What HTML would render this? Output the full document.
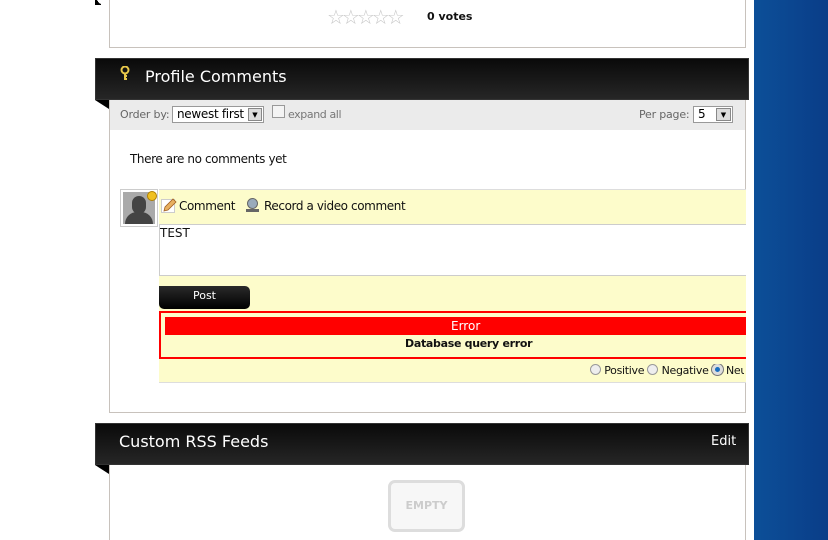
<!DOCTYPE html>
<html><head><meta charset="utf-8"><style>
*{margin:0;padding:0;box-sizing:border-box}
html,body{width:828px;height:540px;overflow:hidden}
body{background:#fff;position:relative;font-family:"DejaVu Sans","Liberation Sans",sans-serif;}
.a{position:absolute}
.blue{left:754px;top:0;width:74px;height:540px;background:linear-gradient(90deg,#0c4f98,#0a3d88)}
.box{border:1px solid #c8c2bc;background:#fff}
.hdr{background:linear-gradient(#0a0a0a,#262626);border:1px solid #333;color:#fff}
.tri{width:0;height:0;border-top:9px solid #000;border-left:14px solid transparent}
.t{font-size:12px;color:#111;white-space:nowrap;letter-spacing:-0.4px}
</style></head><body>
<div class="a blue"></div>
<div class="a box" style="left:109px;top:-5px;width:637px;height:53px"></div>
<div class="a" style="left:95px;top:0;width:8px;height:5px;background:linear-gradient(225deg,#fff 50%,#000 50%)"></div>
<div class="a" style="left:327px;top:5px;font-size:20px;color:#c8c8c8;letter-spacing:-3px">☆☆☆☆☆</div>
<div class="a t" style="left:427px;top:10px;font-weight:bold;font-size:11px;letter-spacing:0">0 votes</div>

<div class="a box" style="left:109px;top:98px;width:637px;height:315px"></div>
<div class="a hdr" style="left:95px;top:58px;width:654px;height:42px"></div>
<div class="a tri" style="left:95px;top:100px"></div>
<svg class="a" style="left:120px;top:66px" width="11" height="15"><circle cx="5" cy="4" r="3.5" fill="none" stroke="#e8c84a" stroke-width="2"/><path d="M5 7v7M5 10h2M5 13h2" stroke="#e8c84a" stroke-width="2"/></svg>
<div class="a" style="left:145px;top:67px;color:#fff;font-size:16px">Profile Comments</div>
<div class="a" style="left:110px;top:100px;width:635px;height:30px;background:#ebebeb"></div>
<div class="a" style="left:120px;top:108px;font-size:11px;color:#666;letter-spacing:-0.2px">Order by:</div>
<div class="a" style="left:172px;top:106px;width:92px;height:17px;border:1px solid #999;background:#fff;font-size:12px;padding-left:4px;line-height:15px;letter-spacing:-0.3px">newest first</div>
<div class="a" style="left:248px;top:108px;width:14px;height:13px;background:#ddd;border:1px solid #888;font-size:7px;text-align:center;line-height:13px">▼</div>
<div class="a" style="left:272px;top:105px;width:13px;height:13px;border:1px solid #999;background:#f4f4f4"></div>
<div class="a" style="left:288px;top:108px;font-size:11px;color:#777;letter-spacing:-0.4px">expand all</div>
<div class="a" style="left:639px;top:108px;font-size:11px;color:#666;letter-spacing:-0.2px">Per page:</div>
<div class="a" style="left:693px;top:106px;width:40px;height:17px;border:1px solid #999;background:#fff;font-size:12px;padding-left:4px;line-height:15px">5</div>
<div class="a" style="left:716px;top:108px;width:15px;height:13px;background:#ddd;border:1px solid #888;font-size:7px;text-align:center;line-height:13px">▼</div>
<div class="a t" style="left:130px;top:152px">There are no comments yet</div>

<div class="a" style="left:120px;top:189px;width:38px;height:38px;border:1px solid #ccc;background:#fff;padding:2px"><div style="position:relative;width:32px;height:32px;background:#aaa;overflow:hidden"><div style="position:absolute;left:9px;top:4px;width:14px;height:18px;border-radius:7px;background:#444"></div><div style="position:absolute;left:2px;top:20px;width:28px;height:16px;border-radius:12px 12px 0 0;background:#444"></div></div><div style="position:absolute;left:26px;top:1px;width:10px;height:10px;border-radius:5px;background:#f0c020;border:1px solid #b08000"></div></div>
<div class="a" style="left:159px;top:189px;width:587px;height:194px;background:#fdfccb;border-top:1px solid #ddd;border-bottom:1px solid #ddd"></div>
<svg class="a" style="left:161px;top:198px" width="16" height="16"><rect x="0.5" y="1.5" width="13" height="13" fill="#fff" stroke="#ccc"/><path d="M3 13l1-4 8-8 3 3-8 8z" fill="#e8b060" stroke="#a06020" stroke-width="0.8"/></svg>
<div class="a t" style="left:179px;top:199px">Comment</div>
<div class="a" style="left:246px;top:198px;width:13px;height:15px"><div style="position:absolute;left:1px;top:0;width:11px;height:11px;border-radius:6px;background:#9ab;border:1px solid #666"></div><div style="position:absolute;left:0;top:11px;width:13px;height:3px;background:#666"></div></div>
<div class="a t" style="left:264px;top:199px">Record a video comment</div>
<div class="a" style="left:159px;top:224px;width:587px;height:52px;background:#fff;border:1px solid #ccc;border-right:none"></div>
<div class="a t" style="left:160px;top:226px;letter-spacing:0">TEST</div>
<div class="a" style="left:159px;top:286px;width:91px;height:23px;background:linear-gradient(#2a2a2a,#000);border-radius:0 5px 5px 5px;color:#fff;font-size:11px;text-align:center;line-height:20px">Post</div>
<div class="a" style="left:159px;top:311px;width:587px;height:48px;border:2px solid #f00;border-right:none"></div>
<div class="a" style="left:165px;top:317px;width:581px;height:18px;background:#f00;color:#fff;font-size:12px;line-height:18px;padding-left:286px">Error</div>
<div class="a t" style="left:405px;top:337px;font-weight:bold;font-size:11px;letter-spacing:-0.3px">Database query error</div>
<div class="a" style="left:590px;top:364px;width:154px;height:14px;overflow:hidden;font-size:11px;white-space:nowrap;color:#111;letter-spacing:-0.3px">
<span style="display:inline-block;width:11px;height:11px;border-radius:6px;border:1px solid #999;background:#eee;vertical-align:-1px"></span> Positive <span style="display:inline-block;width:11px;height:11px;border-radius:6px;border:1px solid #999;background:#eee;vertical-align:-1px"></span> Negative <span style="display:inline-block;width:11px;height:11px;border-radius:6px;border:3px solid #ddd;background:#1a6fc0;vertical-align:-1px;box-shadow:0 0 0 1px #777"></span> Neutral</div>
<div class="a" style="left:746px;top:189px;width:8px;height:200px;background:#fff"></div>

<div class="a box" style="left:109px;top:463px;width:637px;height:90px"></div>
<div class="a hdr" style="left:95px;top:423px;width:654px;height:42px"></div>
<div class="a tri" style="left:95px;top:465px"></div>
<div class="a" style="left:119px;top:432px;color:#fff;font-size:16px">Custom RSS Feeds</div>
<div class="a" style="left:711px;top:434px;color:#fff;font-size:13px">Edit</div>
<div class="a" style="left:388px;top:480px;width:77px;height:52px;border:3px solid #ddd;border-radius:7px;background:#f7f7f7;color:#ccc;font-size:11px;font-weight:bold;text-align:center;line-height:46px">EMPTY</div>
</body></html>
